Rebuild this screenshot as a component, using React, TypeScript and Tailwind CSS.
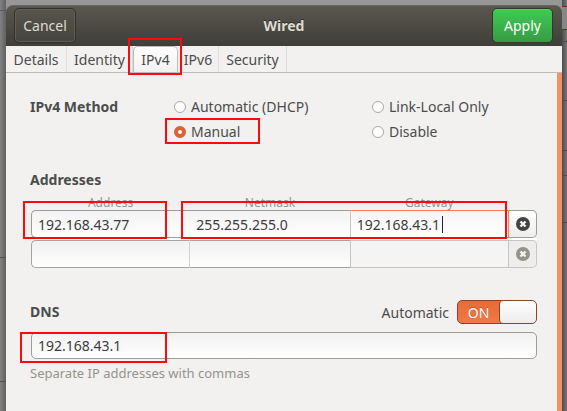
import type { ReactNode } from "react";

const entry =
  "block h-[26px] w-full min-w-0 bg-transparent px-[6px] text-[14px] text-[#3c3c3c] outline-none";
const heading = "text-[14px] font-bold leading-5 text-[#4a4d4c]";

function Highlight({ className }: { className: string }) {
  return (
    <div
      aria-hidden="true"
      className={`pointer-events-none absolute z-10 border-2 border-[#ff0a0a] ${className}`}
    />
  );
}

function Tab({ className, selected, children }: { className: string; selected?: boolean; children: ReactNode }) {
  return (
    <div className={`relative flex shrink-0 ${className}`}>
      <button
        type="button"
        role="tab"
        aria-selected={!!selected}
        className={`h-[26px] w-full whitespace-nowrap text-[14px] text-[#4c4c4c] ${
          selected
            ? "rounded-t-[5px] border border-b-0 border-[#bfbcb8] bg-linear-to-b from-white to-[#f2f1f0] pb-px"
            : "border-r border-[#dddbd9]"
        }`}
      >
        {children}
      </button>
      {selected && <Highlight className="-left-[5px] -right-[4px] -top-[8px] h-[37px]" />}
    </div>
  );
}

function Method({ label, checked }: { label: string; checked?: boolean }) {
  return (
    <div className="relative flex h-[25px] items-center">
      <label className="flex items-center gap-[5px] whitespace-nowrap text-[14px] text-[#4c4c4c]">
        <input
          type="radio"
          name="method"
          defaultChecked={checked}
          className="size-3 shrink-0 appearance-none rounded-full border border-[#aaa7a3] bg-white checked:border-4 checked:border-[#db6237]"
        />
        {label}
      </label>
      {checked && <Highlight className="-left-[9px] -top-px h-[26px] w-[95px]" />}
    </div>
  );
}

function Remove({ disabled }: { disabled?: boolean }) {
  return (
    <button
      type="button"
      aria-label="Remove address"
      disabled={disabled}
      className={`flex h-[26px] w-full items-center justify-center rounded-r-[5px] ${
        disabled ? "bg-[#eeedec] text-[#96938c]" : "bg-linear-to-b from-white to-[#eeeeed] text-[#444444]"
      }`}
    >
      <svg viewBox="0 0 14 14" className="size-[14px]" aria-hidden="true">
        <circle cx="7" cy="7" r="7" fill="currentColor" />
        <path d="M4.5 4.5 9.5 9.5M9.5 4.5 4.5 9.5" stroke="#f4f4f4" strokeWidth="2.4" />
      </svg>
    </button>
  );
}

export default function App() {
  return (
    <div className="relative flex min-h-screen flex-col bg-linear-to-b from-[#979797] via-[#777777] to-[#707070] pl-[6px] pr-[5px] pt-[5px] font-['Noto_Sans','Open_Sans',sans-serif]">
      <div aria-hidden="true" className="absolute inset-y-0 left-0 w-[6px] bg-linear-to-r from-[#828282] to-[#606060]">
        <div className="mt-[10px] h-px bg-[#5c5c5c]" />
        <div className="mt-[246px] h-px bg-[#505050]" />
        <div className="mt-[123px] h-px bg-[#505050]" />
      </div>
      <div aria-hidden="true" className="absolute inset-y-0 right-0 w-[5px] overflow-hidden bg-linear-to-r from-[#4d4d4d] to-[#777777]">
        <div className="mt-[6px] h-[24px] border-y border-[#64301f] bg-[#868686]" />
        <div className="mt-[11px] h-px bg-[#4a4a4a]" />
        <div className="mt-[58px] h-px bg-[#4a4a4a]" />
        <div className="mt-[49px] h-px bg-[#4a4a4a]" />
        <div className="mt-[24px] h-px bg-[#4a4a4a]" />
        <div className="mt-[46px] h-px bg-[#4a4a4a]" />
      </div>

      <main className="relative flex flex-1 flex-col">
        <header className="grid h-[41px] shrink-0 grid-cols-[1fr_auto_1fr] items-center rounded-t-[7px] border-t border-[#69665d] bg-linear-to-b from-[#5a574e] to-[#3f3e39] px-2 pb-[2px]">
          <button
            type="button"
            className="h-[35px] w-[62px] rounded-[5px] border border-[#32312d] bg-linear-to-b from-[#57544b] to-[#45443e] text-[14px] text-[#dfdbd2] shadow-[inset_0_0_0_1px_#605e55]"
          >
            Cancel
          </button>
          <h1 className="text-[14px] font-bold text-[#dfdbd2] [text-shadow:0_-1px_#2c2b28]">Wired</h1>
          <button
            type="button"
            className="mr-px h-[35px] w-[61px] justify-self-end rounded-[5px] border border-[#2e3b2b] bg-linear-to-b from-[#3fcb53] to-[#379b45] text-[14px] text-white shadow-[inset_0_1px_#51d263]"
          >
            Apply
          </button>
        </header>

        <div role="tablist" className="flex h-[27px] shrink-0 border-b border-[#bebbb8] bg-[#f2f1f0]">
          <Tab className="w-[61px]">Details</Tab>
          <Tab className="w-[66px]">Identity</Tab>
          <Tab className="w-[45px]" selected>IPv4</Tab>
          <Tab className="w-[41px]">IPv6</Tab>
          <Tab className="w-[68px]">Security</Tab>
        </div>

        <form className="flex-1 border-r-[5px] border-[#f39069] bg-[#f2f1f0] pb-[26px] pl-6 pr-5 pt-[21px]">
          <div role="radiogroup" aria-labelledby="method" className="grid grid-cols-[144px_198px_1fr]">
            <h2 id="method" className={`${heading} row-span-2 pt-[3px]`}>IPv4 Method</h2>
            <Method label="Automatic (DHCP)" />
            <Method label="Link-Local Only" />
            <Method label="Manual" checked />
            <Method label="Disable" />
          </div>

          <h2 className={`${heading} mt-[26px]`}>Addresses</h2>
          <div className="relative ml-px mt-[5px]">
            <table className="w-full table-fixed border-separate border-spacing-0">
              <colgroup>
                <col />
                <col />
                <col />
                <col className="w-[28px]" />
              </colgroup>
              <thead>
                <tr className="h-[15px] text-[12px] leading-[15px] text-[#92948c]">
                  <th className="p-0 font-normal">Address</th>
                  <th className="p-0 font-normal">Netmask</th>
                  <th className="p-0 font-normal">Gateway</th>
                  <th className="p-0" />
                </tr>
              </thead>
              <tbody>
                <tr>
                  <td className="rounded-l-[5px] border border-r-0 border-[#9c9c9a] bg-linear-to-b from-[#f3f3f3] to-white p-0">
                    <input aria-label="Address 1" className={entry} defaultValue="192.168.43.77" />
                  </td>
                  <td className="border-y border-[#9c9c9a] bg-linear-to-b from-[#f3f3f3] to-white p-0">
                    <input aria-label="Netmask 1" className={entry} defaultValue="255.255.255.0" />
                  </td>
                  <td className="relative border border-[#f0824f] border-l-[#c7c5c3] bg-linear-to-b from-[#f5f5f5] to-white p-0">
                    <input aria-label="Gateway 1" className={entry} defaultValue="192.168.43.1" />
                    <span aria-hidden="true" className="absolute left-[91px] top-[5px] h-[17px] w-px bg-[#222222]" />
                  </td>
                  <td className="rounded-r-[5px] border border-l-0 border-[#9c9c9a] p-0">
                    <Remove />
                  </td>
                </tr>
                <tr aria-hidden="true">
                  <td colSpan={4} className="h-[2px] bg-white p-0" />
                </tr>
                <tr>
                  <td className="rounded-l-[5px] border border-r-[#d4d2d0] border-[#a4a3a1] bg-linear-to-b from-[#f0f0f0] to-white p-0">
                    <input aria-label="Address 2" className={entry} />
                  </td>
                  <td className="border-y border-[#a4a3a1] bg-linear-to-b from-[#f0f0f0] to-white p-0">
                    <input aria-label="Netmask 2" className={entry} />
                  </td>
                  <td className="border border-[#c7c5c3] bg-[#f4f4f4] p-0">
                    <input aria-label="Gateway 2" className={entry} disabled />
                  </td>
                  <td className="rounded-r-[5px] border border-l-0 border-[#c7c5c3] p-0">
                    <Remove disabled />
                  </td>
                </tr>
              </tbody>
            </table>
            <Highlight className="-left-[8px] top-[6px] h-[38px] w-[144px]" />
            <Highlight className="left-[150px] right-[30px] top-[6px] h-[38px]" />
          </div>

          <div className="mt-8 flex h-6 items-center">
            <h2 className={`${heading} flex-1`} id="dns">DNS</h2>
            <label className="flex items-center gap-2 text-[14px] text-[#4c4c4c]">
              Automatic
              <span className="relative flex h-6 w-20 items-center justify-end overflow-hidden rounded-[5px] border border-[#8d4328] bg-linear-to-b from-[#e66b37] to-[#f07947]">
                <input type="checkbox" role="switch" defaultChecked className="absolute inset-0 appearance-none" />
                <span className="flex-1 text-center text-white [text-shadow:0_-1px_#b9532b]">ON</span>
                <span className="h-[22px] w-[37px] rounded-[4px] border-l border-[#8d4328] bg-linear-to-b from-white to-[#ececeb]" />
              </span>
            </label>
          </div>
          <div className="relative ml-px mt-2">
            <input
              aria-labelledby="dns"
              aria-describedby="dns-hint"
              defaultValue="192.168.43.1"
              className="block h-[27px] w-full rounded-[5px] border border-[#9c9c9a] bg-linear-to-b from-[#f1f1f1] to-white px-[6px] text-[14px] text-[#3c3c3c] outline-none"
            />
            <Highlight className="-left-[11px] top-0 h-[31px] w-[147px]" />
          </div>
          <p id="dns-hint" className="mt-[6px] text-[13px] leading-4 text-[#92948c]">
            Separate IP addresses with commas
          </p>
        </form>
      </main>
    </div>
  );
}
